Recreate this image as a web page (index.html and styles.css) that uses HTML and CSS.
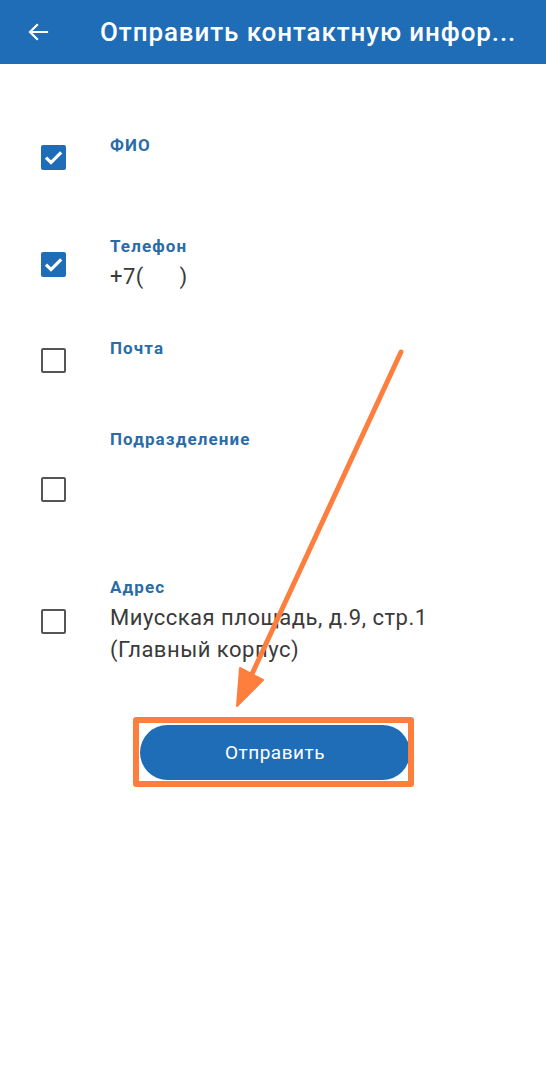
FILE: index.html
```html
<!DOCTYPE html>
<html lang="ru">
<head>
<meta charset="utf-8">
<title>Отправить контактную информацию</title>
<link rel="stylesheet" href="styles.css">
</head>
<body>
<div class="screen">
  <header class="appbar">
    <button class="back" aria-label="Назад">
      <svg width="24" height="24" viewBox="0 0 24 24"><path d="M21 12H4.5M11 5l-7 7 7 7" fill="none" stroke="#fff" stroke-width="2.2" stroke-linecap="square" stroke-linejoin="miter"/></svg>
    </button>
    <h1 class="title">Отправить контактную инфор...</h1>
  </header>

  <main class="content">
    <ul class="list">
      <li class="row">
        <span class="cb cb-on"><svg viewBox="0 0 25 25" width="25" height="25"><path d="M5 12.6l5 5 10.2-10.2" fill="none" stroke="#fff" stroke-width="3.2"/></svg></span>
        <div class="field">
          <div class="label">ФИО</div>
          <div class="value value-blank"></div>
        </div>
      </li>
      <li class="row row-phone">
        <span class="cb cb-on"><svg viewBox="0 0 25 25" width="25" height="25"><path d="M5 12.6l5 5 10.2-10.2" fill="none" stroke="#fff" stroke-width="3.2"/></svg></span>
        <div class="field">
          <div class="label">Телефон</div>
          <div class="value">+7(&nbsp;&nbsp;&nbsp;&nbsp;&nbsp;&nbsp;)</div>
        </div>
      </li>
      <li class="row">
        <span class="cb"></span>
        <div class="field">
          <div class="label">Почта</div>
          <div class="value value-blank"></div>
        </div>
      </li>
      <li class="row">
        <span class="cb"></span>
        <div class="field">
          <div class="label">Подразделение</div>
          <div class="value value-blank3"></div>
        </div>
      </li>
      <li class="row row-addr">
        <span class="cb"></span>
        <div class="field">
          <div class="label">Адрес</div>
          <div class="value">Миусская площадь, д.9, стр.1<br>(Главный корпус)</div>
        </div>
      </li>
    </ul>

    <div class="actions">
      <div class="btn-wrap">
        <button class="btn">Отправить</button>
        <span class="highlight"></span>
      </div>
    </div>
  </main>

  <svg class="annot" width="546" height="1074" viewBox="0 0 546 1074">
    <line x1="401" y1="352" x2="252" y2="674" stroke="#fe7e3e" stroke-width="5" stroke-linecap="round"/>
    <polygon points="237,706 263,680 240,668" fill="#fe7e3e" stroke="#fe7e3e" stroke-width="2" stroke-linejoin="round"/>
  </svg>
</div>
</body>
</html>
```

FILE: styles.css
```css
* { box-sizing: border-box; }
html, body { margin: 0; padding: 0; background: #fff; }
body { font-family: Roboto, "Noto Sans", "Liberation Sans", sans-serif; }

.screen { position: relative; width: 546px; min-height: 1074px; }

.appbar {
  height: 64px;
  background: #1f6db7;
  display: flex;
  align-items: center;
  padding: 0 20px 0 22px;
}
.back {
  width: 32px; height: 32px;
  padding: 0; border: 0; background: none;
  display: flex; align-items: center; justify-content: center;
  margin-right: 46px;
}
.title {
  margin: 0;
  flex: 1;
  min-width: 0;
  color: #fff;
  font-size: 26px;
  font-weight: 500;
  line-height: 30px;
  white-space: nowrap;
  letter-spacing: 0.9px;
}

.content { padding-top: 70px; }

.list { list-style: none; margin: 0; padding: 0; }
.row {
  display: flex;
  align-items: center;
  padding-left: 41px;
}
.row + .row { margin-top: 44px; }
.row + .row-phone { margin-top: 54px; }
.row + .row-addr { margin-top: 26px; }

.cb {
  flex: none;
  width: 25px; height: 25px;
  border: 2px solid #555;
  border-radius: 2px;
  margin-right: 44px;
  display: block;
}
.cb svg { display: block; margin: -2px; }
.cb-on { background: #1f6db7; border-color: #1f6db7; }

.field { display: flex; flex-direction: column; }
.label {
  color: #2a6ca8;
  font-size: 17px;
  font-weight: 700;
  line-height: 22px;
  letter-spacing: 1.1px;
}
.value {
  margin-top: 4px;
  color: #3a3a3a;
  font-size: 22px;
  line-height: 32px;
  letter-spacing: 0.5px;
}
.value-blank { height: 21px; }
.value-blank3 { height: 96px; }

.actions { padding: 59px 0 0 140px; }
.btn-wrap { position: relative; width: 270px; }
.btn {
  display: block;
  width: 270px; height: 55px;
  border: 0;
  border-radius: 28px;
  background: #1f6db7;
  color: #fff;
  font-family: inherit;
  font-size: 19px;
  font-weight: 400;
  letter-spacing: 0.5px;
}
.highlight {
  position: absolute;
  left: -7px; right: -4px; top: -8px; bottom: -7px;
  border: 6px solid #fe7e3e;
  border-radius: 3px;
  pointer-events: none;
}

.annot { position: absolute; left: 0; top: 0; pointer-events: none; }
```
